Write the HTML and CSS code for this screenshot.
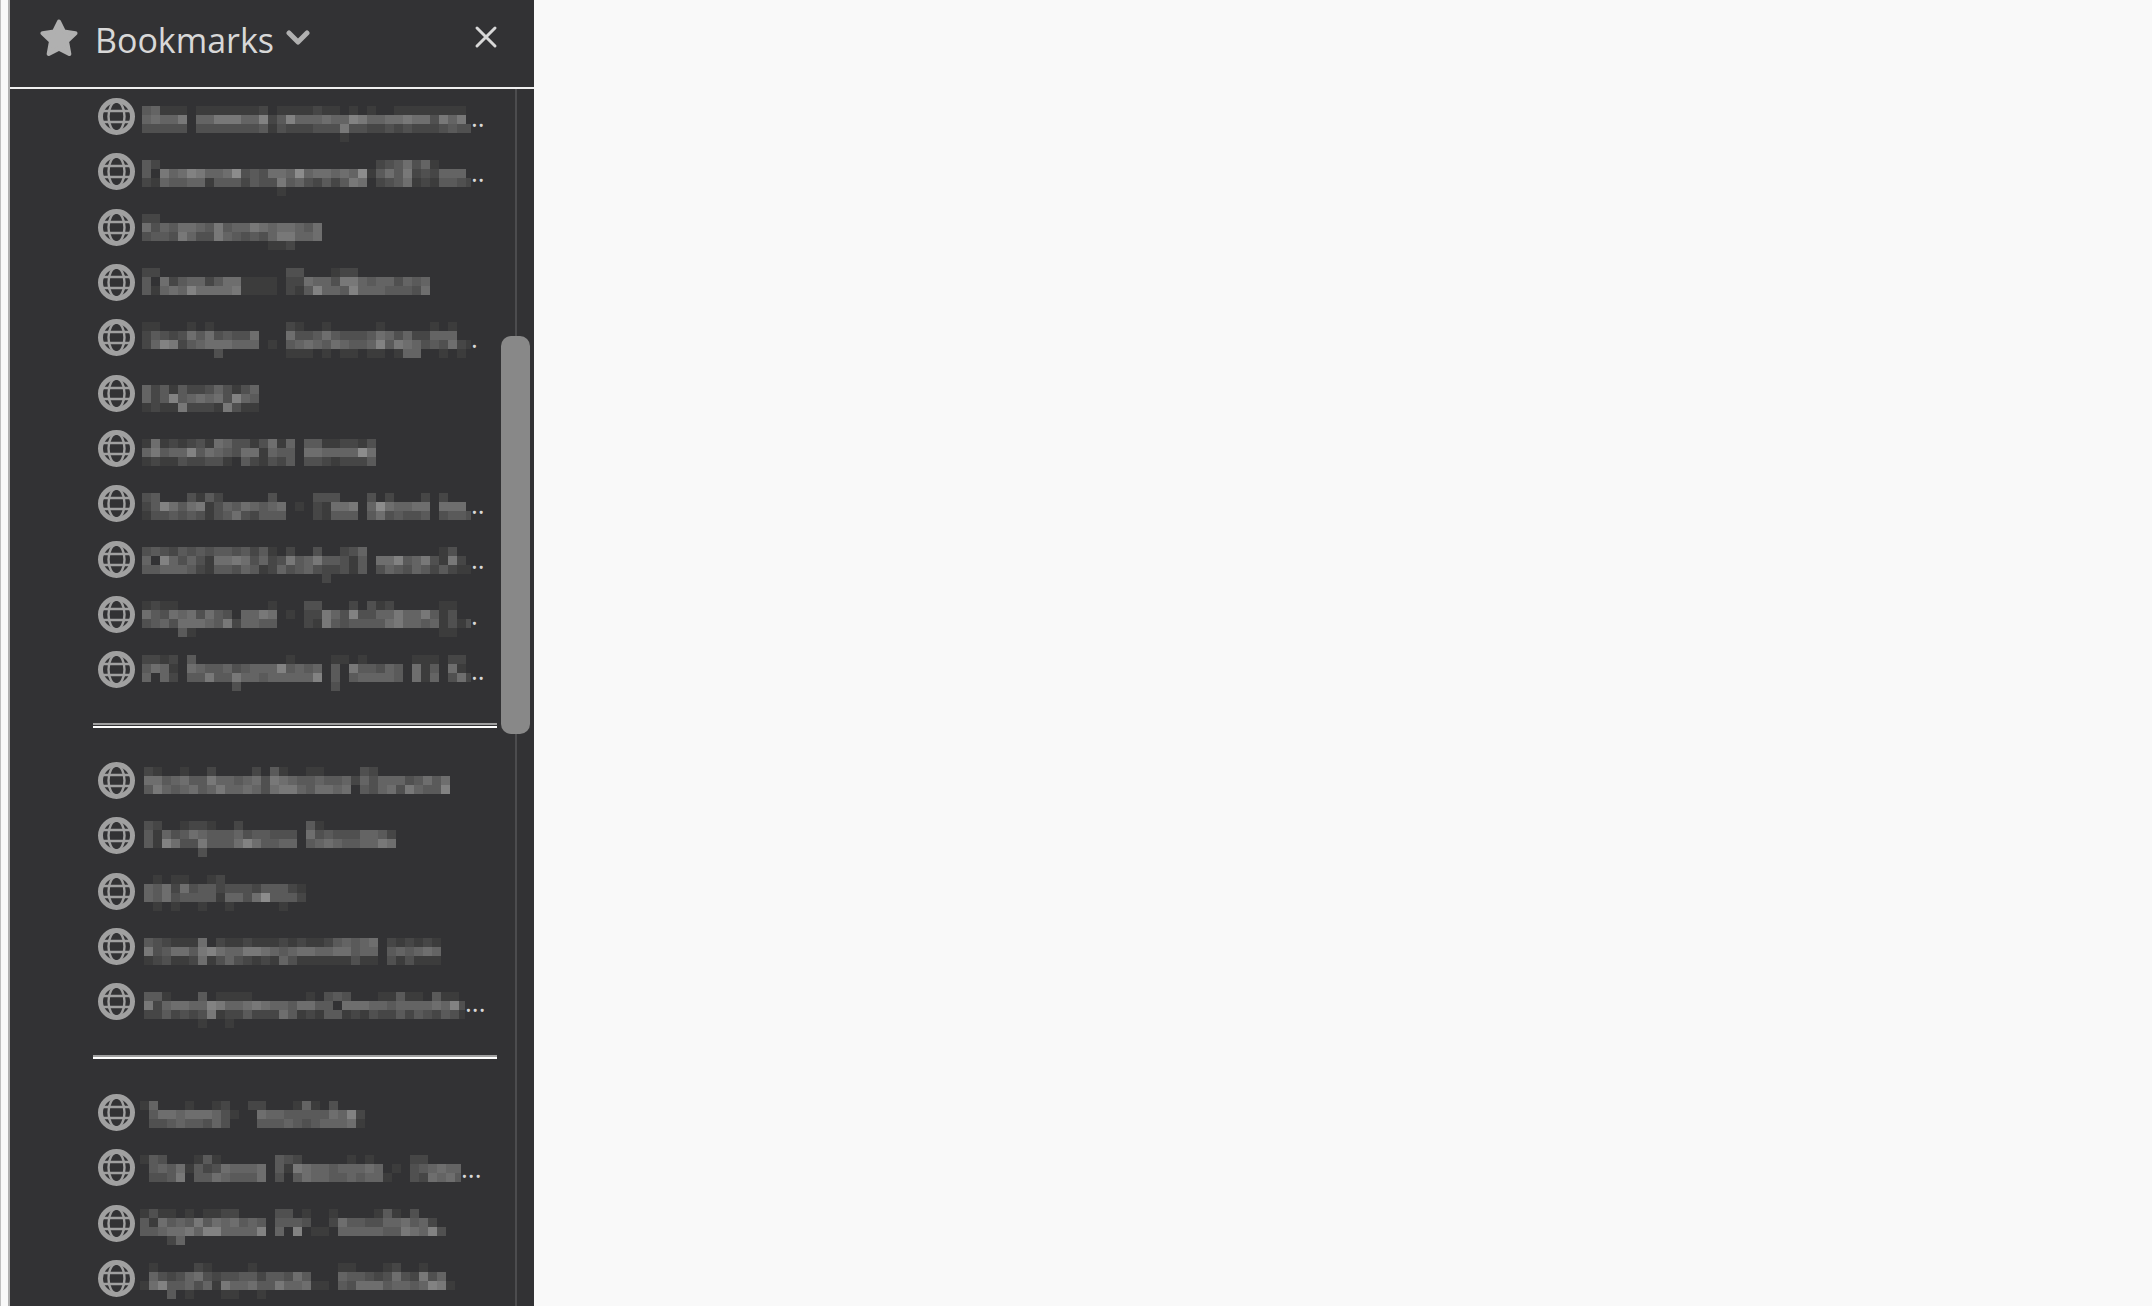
FILE: index.html
```html
<!DOCTYPE html>
<html lang="en">
<head>
  <meta charset="UTF-8" />
  <meta name="viewport" content="width=device-width, initial-scale=1.0" />
  <title>Bookmarks</title>
  <link rel="stylesheet" href="styles.css">
</head>
<body>
  <svg class="defs" aria-hidden="true">
    <symbol id="globe" viewBox="0 0 37 37">
      <g fill="none" stroke="currentColor">
        <circle cx="18.5" cy="18.5" r="16" stroke-width="5" />
        <ellipse cx="18.500" cy="18.5" rx="8" ry="15" stroke-width="2.4" />
        <path d="M5 13h27M5 24h27" stroke-width="2.4" />
      </g>
    </symbol>
  </svg>

  <aside class="sidebar">
    <header class="sidebar-header">
      <button class="switcher" type="button">
        <svg class="star" viewBox="0 0 37 37" aria-hidden="true">
          <path d="M18.500 2.500l4.800 9.800 11.200 1.600-8.200 7.800 2.200 12.300-10-5.200-10 5.200 2.200-12.300-8.200-7.800 11.200-1.600z" fill="currentColor" stroke="currentColor" stroke-width="4" stroke-linejoin="round" />
        </svg>
        <span class="title">Bookmarks</span>
        <svg class="chevron" viewBox="0 0 24 24" aria-hidden="true">
          <path d="M3 7l9 9 9-9" fill="none" stroke="currentColor" stroke-width="5" stroke-linecap="round" stroke-linejoin="round" />
        </svg>
      </button>
      <button class="close" type="button" aria-label="Close">
        <svg viewBox="0 0 24 24" aria-hidden="true">
          <path d="M3 3l18 18M21 3L3 21" fill="none" stroke="currentColor" stroke-width="3" stroke-linecap="round" />
        </svg>
      </button>
    </header>

    <div class="sidebar-body">
      <ul id="list" class="list"></ul>
      <div class="scrollbar"><div class="thumb"></div></div>
    </div>
  </aside>
  <main class="page"></main>

  <script src="script.js"></script>
</body>
</html>
```
FILE: styles.css
```css
* {
  box-sizing: border-box;
}
body {
  margin: 0;
  display: flex;
  min-height: 100vh;
  background-color: #f9f9f9;
  font-family: "Open Sans", "Noto Sans", sans-serif;
  color: #d8d8d8;
  border-left: 1px solid #c0c0c0;
}
button {
  padding: 0;
  border: 0;
  background: none;
  color: inherit;
  font: inherit;
  cursor: pointer;
}
.defs {
  position: absolute;
  width: 0;
  height: 0;
}
.sidebar {
  display: flex;
  flex-direction: column;
  flex: none;
  width: 526px;
  margin-left: 7px;
  border-left: 2px solid #b0b0b0;
  background-color: #323234;
}
.sidebar-header {
  display: flex;
  align-items: flex-start;
  justify-content: space-between;
  height: 89px;
  padding: 14px 36px 0 30px;
  border-bottom: 2px solid #f0f0f0;
}
.switcher {
  display: flex;
  align-items: center;
  height: 48px;
}
.star {
  width: 38px;
  height: 38px;
  color: #b0b0b0;
}
.title {
  margin: 4px 12px 0 17px;
  font-size: 34px;
  line-height: 44px;
}
.chevron {
  width: 24px;
  height: 24px;
  color: #b0b0b0;
}
.close {
  width: 24px;
  height: 46px;
}
.close svg {
  display: block;
  width: 24px;
  height: 24px;
}
.sidebar-body {
  display: flex;
  flex: 1;
}
.list {
  flex: 1;
  display: grid;
  grid-auto-rows: minmax(55px, 1fr);
  margin: 0;
  padding: 0 4px 0 83px;
  list-style: none;
}
.list a {
  display: flex;
  align-items: center;
  height: 100%;
  padding-left: 5px;
  color: inherit;
  text-decoration: none;
}
.globe {
  flex: none;
  width: 37px;
  height: 37px;
  color: #a0a0a0;
}
.label {
  flex: none;
  height: 55px;
  shape-rendering: crispEdges;
}
.group1 .label { margin-left: 7px; width: 329px; }
.group2 .label { margin-left: 9px; width: 321px; }
.group3 .label { margin-left: 5px; width: 321px; }
.dots {
  font-size: 26px;
  line-height: 36px;
}
.separator {
  display: flex;
  align-items: center;
}
.separator hr {
  width: 100%;
  height: 5px;
  margin: 0;
  border: 0;
  border-top: 2px solid #a0a0a0;
  border-bottom: 2px solid #fff;
}
.group2 + .separator hr {
  height: 4px;
}
.scrollbar {
  position: relative;
  width: 33px;
}
.scrollbar::before {
  content: "";
  position: absolute;
  top: 0;
  bottom: 0;
  left: 14px;
  width: 2px;
  background-color: #4c4c4e;
}
.thumb {
  position: absolute;
  top: 247px;
  left: 0;
  width: 29px;
  height: 398px;
  border-radius: 10px;
  background-color: #888;
}
.page {
  flex: 1;
}
```
FILE: script.js
```js
// Titles are kept as coarse brightness cells, "." is empty and 9 is brightest
const CELL = 9;

const groups = [
  {
    name: "group1",
    phase: 7,
    items: [
      { dots: "..", rows: ["451110111111120111121101010011111111", "565570557775582485556558755667663757", "3333303333333413222333733223232223433", "......................1"] },
      { dots: "..", rows: ["42........................2346351", "407568755693436659566565914647232555", "2154455144424337453242476023461214432", "...............1"] },
      { dots: "", rows: ["22", "63546654745576566546", "34437533754343577556", "..............112"] },
      { dots: "", rows: ["22..............33...122", "40624552466111102265537754553545", "41565866667111102148554855544436"] },
      { dots: ".", rows: ["11...1.1........21..1.....1.....1.1", "2432364634336...6334643334653522555", "2587245666555.1.456546544584765343621", "........3.......111.1.11.11.155..1.1"] },
      { dots: "", rows: ["5241422353135", "5248456563854", "1211722217311"] },
      { dots: "", rows: ["16121231653313615.44112213", "57455846543661544.66555596", "12113223310421324.33212224"] },
      { dots: "..", rows: ["34...3142.....3....333...3.2...2.2", "2486467135465456.1.21667.5965566.666", "1334343134632444...21444.4634334.3443"] },
      { dots: "..", rows: ["343243434434241.2..3..235........13", "5085353166763523745744314.6684573172", "4455542144354125345322314.35435424211", "....................2"] },
      { dots: ".", rows: ["1211..........1...33...2.312.....11", "6436563643.5576.1.22753833557557413", "345366654725544...2174344446755451313", "....41...........................11"] },
      { dots: "..", rows: ["2212.4..........1....11.1.....111.22", "4651.654453455584545.4.744354.614.61", "5052.447447554555558.4.455554.615.362", "..........3..........3"] }
    ]
  },
  {
    name: "group2",
    phase: 2,
    items: [
      { dots: "", rows: ["21..1..2....2.41..11....32", "6645644755456376544544525355534646", "47545645755653677546656.4356375448"] },
      { dots: "", rows: ["32..1221..2.......41", "41534654445344333.6343335542", "41863374446864455.4565445576", "......3"] },
      { dots: "", rows: [".1.11..12", "546263442333244421", "546344441553694442", ".1.1..1..1.....1"] },
      { dots: "", rows: ["432111602112111212112454560212121", "73466478655776545665566455.454565", "123112613532121531111113110313111"] },
      { dots: "...", rows: ["441...4.1111......1.343...11411.411", "725665587556765546644066655455556583", "224232371224222641214412132242432431", "......1..1"] }
    ]
  },
  {
    name: "group3",
    phase: 3,
    items: [
      { dots: "", rows: ["15...1..12..22...151.3", ".4665666531..655444446582", ".334544353...444543455561"] },
      { dots: "...", rows: ["143...141......432.....1.1....22", ".4546142365556.417655455565.1.345655", ".3347.44654446.3.46554454551..326564"] },
      { dots: "", rows: ["1311.1.1122....33.1..1....141.3", "41645474656454.4443..264433556452", "44566758855558.5.8.11.555554476583", "...25"] },
      { dots: "", rows: [".1....21....1.........11...12..1", ".532356323344244364...544323632735", "168445351755644755611.4366645545871", "...4.1...11..1"] }
    ]
  }
];

const list = document.getElementById("list");

function addItem(group, item) {
  const li = document.createElement("li");
  li.className = group.name;
  li.innerHTML = `<a href="#" aria-label="Bookmark"><svg class="globe" aria-hidden="true"><use href="#globe"/></svg><svg class="label" aria-hidden="true"></svg><span class="dots">${item.dots}</span></a>`;
  list.appendChild(li);
}

function drawLabel(svg, group, item) {
  const top = Math.round(svg.getBoundingClientRect().top + window.scrollY);
  // all labels of a group share one vertical cell grid
  const start = Math.ceil((top + 11 - group.phase) / CELL) * CELL + group.phase - top;
  let cells = "";
  item.rows.forEach((row, r) => {
    [...row].forEach((level, c) => {
      if (level === "." || level === "0") return;
      const v = 50 + level * 10;
      cells += `<rect x="${c * CELL}" y="${start + r * CELL}" width="${CELL}" height="${CELL}" fill="rgb(${v},${v},${v})"/>`;
    });
  });
  svg.innerHTML = cells;
}

groups.forEach((group, i) => {
  if (i > 0) {
    const li = document.createElement("li");
    li.className = "separator";
    li.innerHTML = "<hr>";
    list.appendChild(li);
  }
  group.items.forEach(item => addItem(group, item));
});

function drawLabels() {
  const labels = document.querySelectorAll(".label");
  let n = 0;
  groups.forEach(group => {
    group.items.forEach(item => drawLabel(labels[n++], group, item));
  });
}

drawLabels();
window.addEventListener("resize", drawLabels);
```
